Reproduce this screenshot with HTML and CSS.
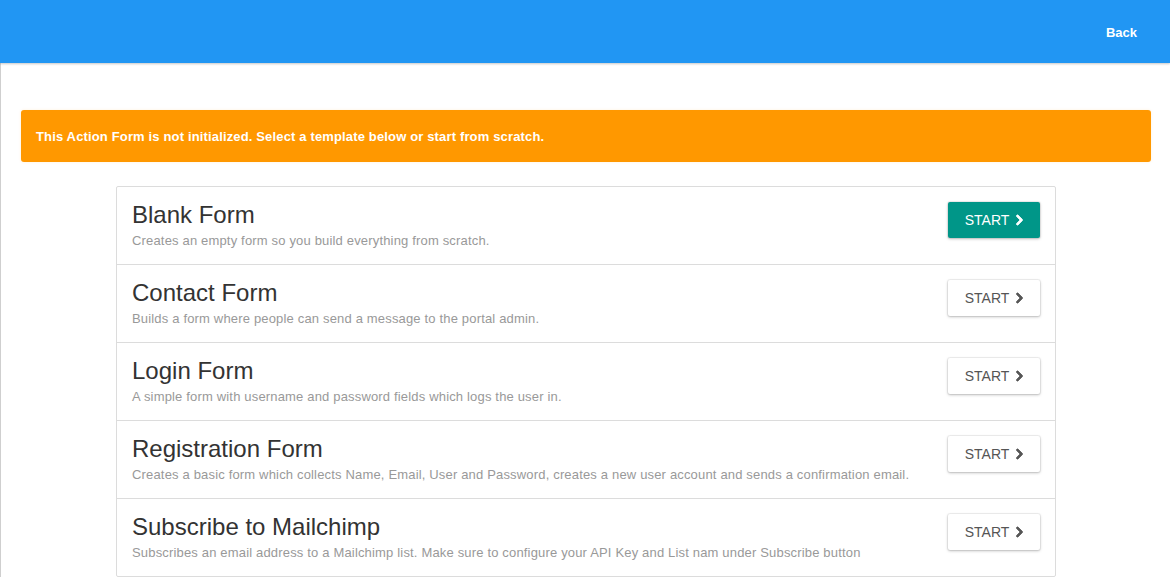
FILE: index.html
```html
<!DOCTYPE html>
<html>
<head>
<meta charset="utf-8">
<link rel="stylesheet" href="styles.css">
</head>
<body>
<header class="topbar">
  <a class="back" href="#">Back</a>
</header>
<main class="page">
  <div class="alert">This Action Form is not initialized. Select a template below or start from scratch.</div>
  <ul class="templates">
    <li class="tpl">
      <div class="tpl-text">
        <h2 class="tpl-title">Blank Form</h2>
        <p class="tpl-desc">Creates an empty form so you build everything from scratch.</p>
      </div>
      <button class="btn btn-primary">START <svg class="chev" viewBox="0 0 320 512"><path d="M285.5 273L91.1 467.3c-9.4 9.4-24.6 9.4-33.9 0l-22.7-22.7c-9.4-9.4-9.4-24.5 0-33.9L188.5 256 34.5 101.3c-9.3-9.4-9.3-24.5 0-33.9l22.7-22.7c9.4-9.4 24.6-9.4 33.9 0L285.5 239c9.4 9.4 9.4 24.6 0 34z"/></svg></button>
    </li>
    <li class="tpl">
      <div class="tpl-text">
        <h2 class="tpl-title">Contact Form</h2>
        <p class="tpl-desc">Builds a form where people can send a message to the portal admin.</p>
      </div>
      <button class="btn">START <svg class="chev" viewBox="0 0 320 512"><path d="M285.5 273L91.1 467.3c-9.4 9.4-24.6 9.4-33.9 0l-22.7-22.7c-9.4-9.4-9.4-24.5 0-33.9L188.5 256 34.5 101.3c-9.3-9.4-9.3-24.5 0-33.9l22.7-22.7c9.4-9.4 24.6-9.4 33.9 0L285.5 239c9.4 9.4 9.4 24.6 0 34z"/></svg></button>
    </li>
    <li class="tpl">
      <div class="tpl-text">
        <h2 class="tpl-title">Login Form</h2>
        <p class="tpl-desc">A simple form with username and password fields which logs the user in.</p>
      </div>
      <button class="btn">START <svg class="chev" viewBox="0 0 320 512"><path d="M285.5 273L91.1 467.3c-9.4 9.4-24.6 9.4-33.9 0l-22.7-22.7c-9.4-9.4-9.4-24.5 0-33.9L188.5 256 34.5 101.3c-9.3-9.4-9.3-24.5 0-33.9l22.7-22.7c9.4-9.4 24.6-9.4 33.9 0L285.5 239c9.4 9.4 9.4 24.6 0 34z"/></svg></button>
    </li>
    <li class="tpl">
      <div class="tpl-text">
        <h2 class="tpl-title">Registration Form</h2>
        <p class="tpl-desc">Creates a basic form which collects Name, Email, User and Password, creates a new user account and sends a confirmation email.</p>
      </div>
      <button class="btn">START <svg class="chev" viewBox="0 0 320 512"><path d="M285.5 273L91.1 467.3c-9.4 9.4-24.6 9.4-33.9 0l-22.7-22.7c-9.4-9.4-9.4-24.5 0-33.9L188.5 256 34.5 101.3c-9.3-9.4-9.3-24.5 0-33.9l22.7-22.7c9.4-9.4 24.6-9.4 33.9 0L285.5 239c9.4 9.4 9.4 24.6 0 34z"/></svg></button>
    </li>
    <li class="tpl">
      <div class="tpl-text">
        <h2 class="tpl-title">Subscribe to Mailchimp</h2>
        <p class="tpl-desc">Subscribes an email address to a Mailchimp list. Make sure to configure your API Key and List nam under Subscribe button</p>
      </div>
      <button class="btn">START <svg class="chev" viewBox="0 0 320 512"><path d="M285.5 273L91.1 467.3c-9.4 9.4-24.6 9.4-33.9 0l-22.7-22.7c-9.4-9.4-9.4-24.5 0-33.9L188.5 256 34.5 101.3c-9.3-9.4-9.3-24.5 0-33.9l22.7-22.7c9.4-9.4 24.6-9.4 33.9 0L285.5 239c9.4 9.4 9.4 24.6 0 34z"/></svg></button>
    </li>
  </ul>
</main>
</body>
</html>
```
FILE: styles.css
```css
* { box-sizing: border-box; }
html, body {
  margin: 0;
  padding: 0;
  background: #fff;
  font-family: "Liberation Sans", Arial, sans-serif;
}
.topbar {
  height: 63px;
  background: #2196f3;
  box-shadow: 0 1px 2px rgba(0, 0, 0, 0.22);
  display: flex;
  align-items: center;
  justify-content: flex-end;
  padding: 0 33px 0 0;
  position: relative;
  z-index: 1;
}
.back {
  color: #fff;
  font-weight: bold;
  font-size: 13px;
  text-decoration: none;
  margin-top: 1px;
}
.page {
  border-left: 1px solid #cfcfcf;
  padding: 47px 19px 0 20px;
  min-height: 514px;
}
.alert {
  background: #ff9800;
  color: #fff;
  font-weight: bold;
  font-size: 13px;
  letter-spacing: 0.15px;
  height: 52px;
  border-radius: 3px;
  display: flex;
  align-items: center;
  padding: 0 15px;
  box-shadow: 0 0 3px rgba(255, 152, 0, 0.15);
}
.templates {
  list-style: none;
  margin: 24px auto 0;
  padding: 0;
  width: 940px;
  border: 1px solid #dcdcdc;
  border-radius: 2px;
}
.tpl {
  display: flex;
  align-items: flex-start;
  justify-content: space-between;
  height: 78px;
  padding: 15px 15px 0 15px;
  border-bottom: 1px solid #dcdcdc;
}
.tpl:last-child { border-bottom: none; height: 77px; }
.tpl-title {
  margin: 0;
  font-weight: normal;
  font-size: 24px;
  line-height: 26px;
  color: #333;
}
.tpl-desc {
  margin: 4px 0 0;
  font-size: 13px;
  line-height: 18px;
  letter-spacing: 0.17px;
  color: #999;
}
.btn {
  font-family: "Liberation Sans", Arial, sans-serif;
  font-size: 14px;
  height: 36px;
  width: 92px;
  border: none;
  border-radius: 2px;
  background: #fff;
  color: #555;
  box-shadow: 0 1px 3px rgba(0, 0, 0, 0.25), 0 0 0 1px rgba(0, 0, 0, 0.05);
  display: flex;
  align-items: center;
  justify-content: center;
  gap: 6px;
  padding: 0 0 0 1px;
  cursor: pointer;
  flex-shrink: 0;
}
.btn .chev {
  width: 9px;
  height: 12px;
  fill: #555;
  stroke: #555;
  stroke-width: 40;
  stroke-linejoin: round;
}
.btn-primary {
  background: #009688;
  color: #fff;
}
.btn-primary .chev { fill: #fff; stroke: #fff; }
```
